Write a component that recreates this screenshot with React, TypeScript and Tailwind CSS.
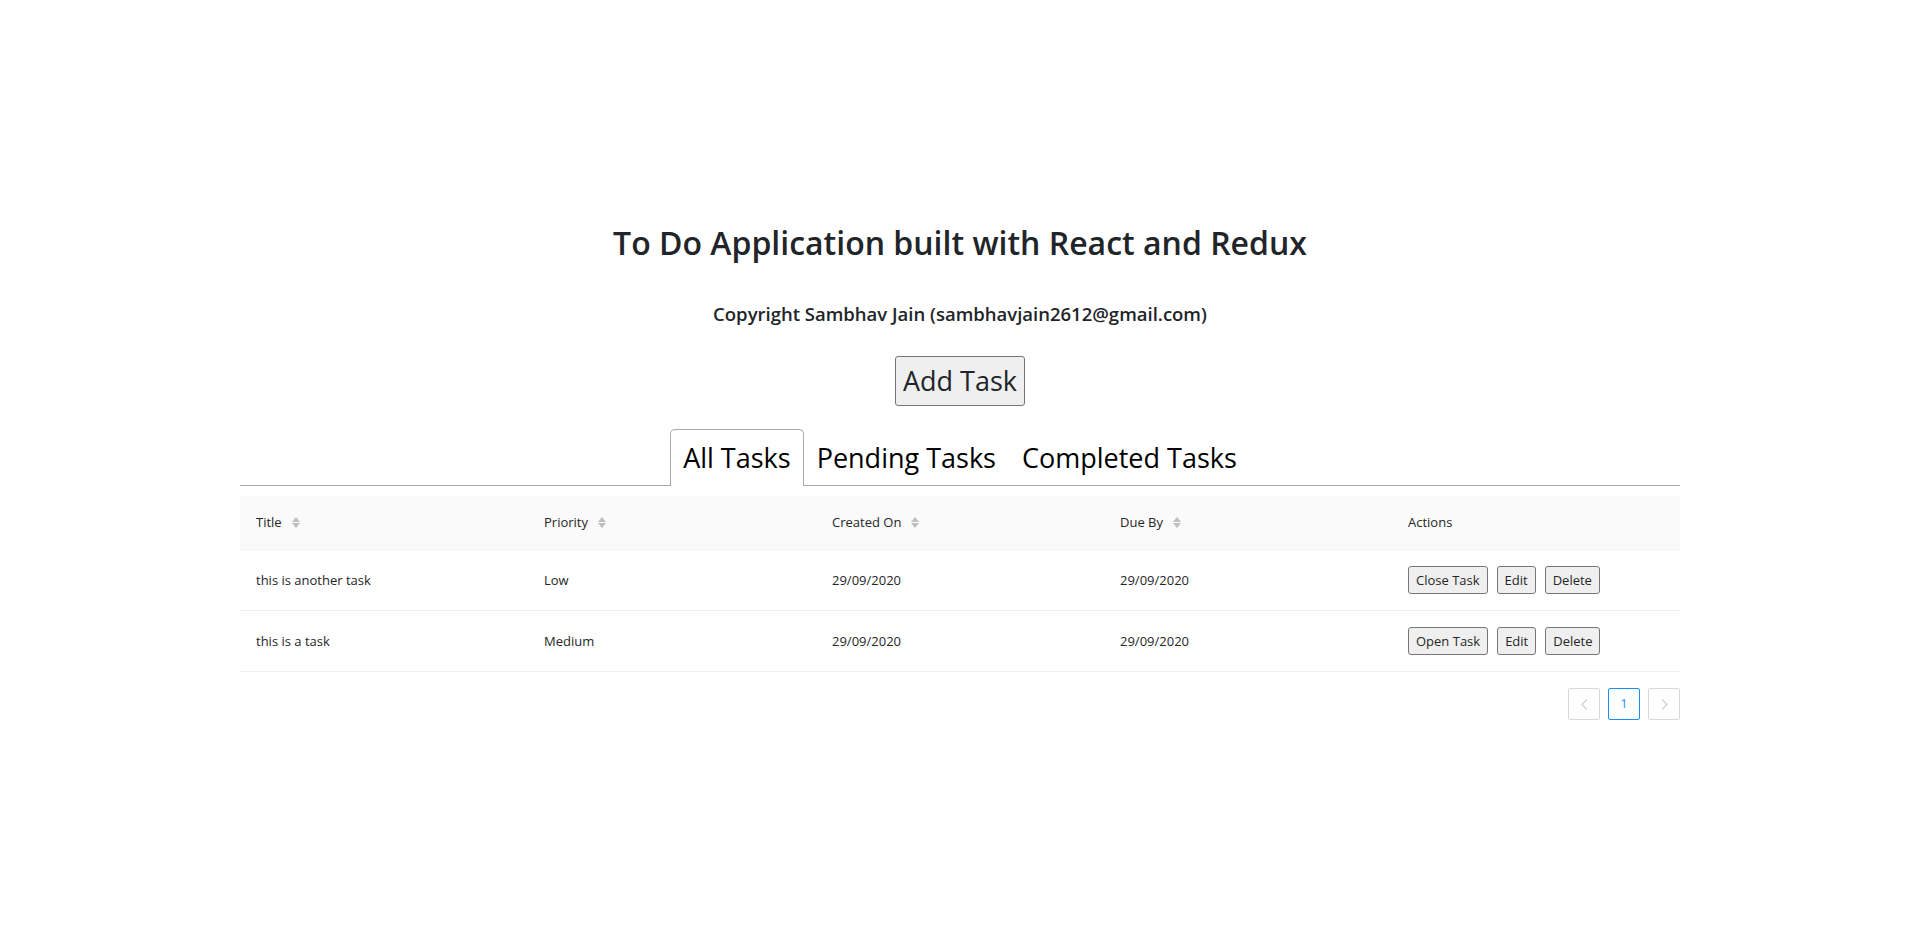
import { useState } from 'react'

interface Task {
    title: string
    priority: string
    createdOn: string
    dueBy: string
    completed: boolean
}

const tasks: Task[] = [
    { title: 'this is another task', priority: 'Low', createdOn: '29/09/2020', dueBy: '29/09/2020', completed: false },
    { title: 'this is a task', priority: 'Medium', createdOn: '29/09/2020', dueBy: '29/09/2020', completed: true },
]

const tabs = ['All Tasks', 'Pending Tasks', 'Completed Tasks']

function SortCarets() {
    return (
        <span className="ml-[10px] inline-flex flex-col items-center gap-[1px] text-[#bfbfbf]">
            <svg width="8" height="5" viewBox="0 0 8 5" fill="currentColor">
                <path d="M4 0 L8 5 L0 5 Z" />
            </svg>
            <svg width="8" height="5" viewBox="0 0 8 5" fill="currentColor">
                <path d="M0 0 L8 0 L4 5 Z" />
            </svg>
        </span>
    )
}

function SmallButton({ label }: { label: string }) {
    return (
        <button className="px-[7px] py-[2px] text-[13px] leading-[22px] text-[#262626] bg-[#efefef] border border-[#767676] rounded-[3px]">
            {label}
        </button>
    )
}

export default function App() {
    const [active, setActive] = useState(0)

    return (
        <div className="min-h-[951px] bg-white text-[#212529] pt-[224px]" style={{ fontFamily: '"Open Sans", "Noto Sans", sans-serif' }}>
            <h2 className="text-center text-[32px] leading-[38px] font-semibold text-[#212529]">
                To Do Application built with React and Redux
            </h2>
            <p className="mt-[40px] text-center text-[18.5px] leading-[24px] font-semibold text-[#212529]">
                Copyright Sambhav Jain (sambhavjain2612@gmail.com)
            </p>

            <div className="mt-[30px] flex justify-center">
                <button className="px-[7px] py-[2px] text-[27px] leading-[44px] text-[#212529] bg-[#efefef] border border-[#767676] rounded-[3px]">
                    Add Task
                </button>
            </div>

            <div className="w-[1440px] mx-auto mt-[22px]">
                <ul className="flex justify-center border-b border-[#aaa] mb-[10px]">
                    {tabs.map((t, i) => (
                        <li
                            key={t}
                            onClick={() => setActive(i)}
                            className={
                                i === active
                                    ? 'relative -bottom-px px-3 pt-[6px] pb-[6px] text-[27px] leading-[44px] text-black bg-white border border-b-0 border-[#aaa] rounded-t-[5px] cursor-pointer'
                                    : 'relative -bottom-px px-3 pt-[6px] pb-[6px] text-[27px] leading-[44px] text-black border border-b-0 border-transparent cursor-pointer'
                            }
                        >
                            {t}
                        </li>
                    ))}
                </ul>

                <table className="w-full table-fixed border-collapse text-[13px] text-[#262626]">
                    <thead>
                        <tr className="bg-[#fafafa] border-b border-[#f0f0f0]">
                            {['Title', 'Priority', 'Created On', 'Due By'].map((h) => (
                                <th key={h} className="p-4 text-left font-medium leading-[21px]">
                                    <span className="inline-flex items-center">
                                        {h}
                                        <SortCarets />
                                    </span>
                                </th>
                            ))}
                            <th className="p-4 text-left font-medium leading-[21px]">Actions</th>
                        </tr>
                    </thead>
                    <tbody>
                        {tasks.map((task) => (
                            <tr key={task.title} className="border-b border-[#f0f0f0]">
                                <td className="px-4 py-4 leading-[28px]">{task.title}</td>
                                <td className="px-4 py-4 leading-[28px]">{task.priority}</td>
                                <td className="px-4 py-4 leading-[28px]">{task.createdOn}</td>
                                <td className="px-4 py-4 leading-[28px]">{task.dueBy}</td>
                                <td className="px-4 py-4">
                                    <div className="flex items-center gap-[9px]">
                                        <SmallButton label={task.completed ? 'Open Task' : 'Close Task'} />
                                        <SmallButton label="Edit" />
                                        <SmallButton label="Delete" />
                                    </div>
                                </td>
                            </tr>
                        ))}
                    </tbody>
                </table>

                <div className="flex justify-end gap-2 mt-4">
                    <div className="w-8 h-8 flex items-center justify-center border border-[#d9d9d9] rounded-[2px] text-[#d0d0d0]">
                        <svg width="7" height="11" viewBox="0 0 7 11" fill="none" stroke="currentColor" strokeWidth="1.2">
                            <path d="M6 0.5 L1 5.5 L6 10.5" />
                        </svg>
                    </div>
                    <div className="w-8 h-8 flex items-center justify-center border border-[#1890ff] rounded-[2px] text-[13px] font-medium text-[#1890ff]">
                        1
                    </div>
                    <div className="w-8 h-8 flex items-center justify-center border border-[#d9d9d9] rounded-[2px] text-[#d0d0d0]">
                        <svg width="7" height="11" viewBox="0 0 7 11" fill="none" stroke="currentColor" strokeWidth="1.2">
                            <path d="M1 0.5 L6 5.5 L1 10.5" />
                        </svg>
                    </div>
                </div>
            </div>
        </div>
    )
}
